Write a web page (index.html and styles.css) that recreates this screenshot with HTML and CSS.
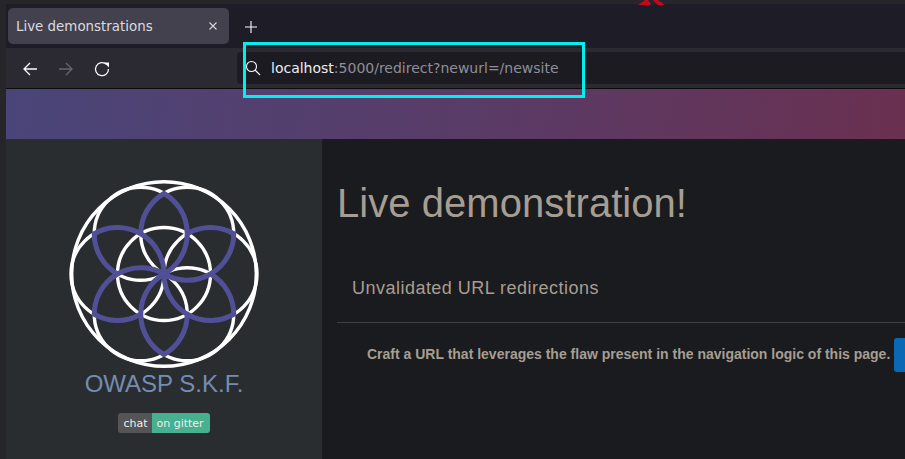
FILE: index.html
```html
<!DOCTYPE html>
<html lang="en">
<head>
  <meta charset="UTF-8">
  <title>Live demonstrations</title>
  <link rel="stylesheet" href="styles.css">
</head>
<body>
  <div class="window">
    <div class="tabbar">
      <div class="tab">
        <span>Live demonstrations</span>
        <svg class="tab-close" width="10" height="10" viewBox="0 0 10 10"><path d="M1.500 1.500l7 7M8.500 1.500l-7 7"/></svg>
      </div>
      <svg class="new-tab" width="12" height="12" viewBox="0 0 12 12"><path d="M6 0v12M0 6h12"/></svg>
    </div>

    <div class="toolbar">
      <div class="nav">
        <svg width="16" height="16" viewBox="0 0 16 16"><path d="M15 8H2M8 2L2 8l6 6"/></svg>
        <svg class="off" width="16" height="16" viewBox="0 0 16 16"><path d="M1 8h13M8 2l6 6-6 6"/></svg>
        <svg width="16" height="16" viewBox="0 0 16 16"><path d="M12.500 3.400A6.500 6.500 0 1 0 14.500 8"/><path class="fill" d="M10 1.500h5v5z"/></svg>
      </div>
      <div class="urlbar">
        <svg width="16" height="16" viewBox="0 0 16 16"><circle cx="6.500" cy="6.500" r="5"/><path d="M10 10l5 5"/></svg>
        <span class="url"><b>localhost</b>:5000/redirect?newurl=/newsite</span>
      </div>
    </div>

    <div class="page">
      <div class="banner"></div>
      <div class="columns">
        <aside class="sidebar">
          <svg class="logo" width="192" height="192" viewBox="-96 -96 192 192">
            <defs>
              <path id="petal" d="M-23.250-40.270A46.500 46.500 0 0 1 0-80.540A46.500 46.500 0 0 1 0 0"/>
            </defs>
            <g class="rings">
              <circle r="92.300"/>
              <circle r="46.500"/>
              <circle cx="46.500" r="46.500"/>
              <circle cx="-46.500" r="46.500"/>
              <circle cx="23.250" cy="-40.270" r="46.500"/>
              <circle cx="-23.250" cy="-40.270" r="46.500"/>
              <circle cx="23.250" cy="40.270" r="46.500"/>
              <circle cx="-23.250" cy="40.270" r="46.500"/>
            </g>
            <g class="petals">
              <use href="#petal"/>
              <use href="#petal" transform="rotate(60)"/>
              <use href="#petal" transform="rotate(120)"/>
              <use href="#petal" transform="rotate(180)"/>
              <use href="#petal" transform="rotate(240)"/>
              <use href="#petal" transform="rotate(300)"/>
            </g>
          </svg>
          <h2 class="brand">OWASP S.K.F.</h2>
          <div class="badge"><span class="badge-l">chat</span><span class="badge-r">on gitter</span></div>
        </aside>
        <main class="content">
          <h1>Live demonstration!</h1>
          <h3>Unvalidated URL redirections</h3>
          <hr>
          <div class="task">
            <p>Craft a URL that leverages the flaw present in the navigation logic of this page.</p>
            <button class="btn"></button>
          </div>
        </main>
      </div>
    </div>
  </div>

  <!-- annotation drawn over the screenshot -->
  <div class="highlight"></div>
  <svg class="red-mark" width="28" height="6" viewBox="0 0 28 6"><path d="M0 5L7 0h3l3 4-1 1zM15 0h5l7 5h-7z"/></svg>
</body>
</html>
```

FILE: styles.css
```css
html, body {
  margin: 0;
  height: 100%;
  overflow: hidden;
  background: #26262a;
}
.window {
  margin-left: 6px;
  padding-top: 4px;
  height: 455px;
  display: flex;
  flex-direction: column;
  font-family: 'DejaVu Sans', sans-serif;
}
.tabbar {
  height: 44px;
  flex: none;
  background: #1e1d27;
  display: flex;
  align-items: center;
  padding-left: 2px;
  box-sizing: border-box;
}
.tab {
  width: 221px;
  height: 36px;
  box-sizing: border-box;
  padding: 0 11px 0 8px;
  background: #42414d;
  border-radius: 5px;
  display: flex;
  align-items: center;
  justify-content: space-between;
  color: #dcdce0;
  font-size: 13.400px;
}
.tab-close path, .new-tab path {
  stroke: #d8d8dc;
  stroke-width: 1.100;
  fill: none;
}
.new-tab {
  margin-left: 16px;
  margin-top: 1px;
}
.new-tab path {
  stroke: #fbfbfe;
}
.toolbar {
  height: 40px;
  flex: none;
  background: #2b2a33;
  display: flex;
  align-items: center;
  border-bottom: 1px solid #0c0c0d;
}
.nav {
  width: 231px;
  padding: 1px 0 0 16px;
  box-sizing: border-box;
  display: flex;
  gap: 20px;
}
.nav svg, .urlbar svg {
  fill: none;
  stroke: #fbfbfe;
  stroke-width: 1.300;
}
.urlbar svg {
  stroke-width: 1.100;
}
.nav .off {
  stroke: #66656d;
}
.nav .fill {
  fill: #fbfbfe;
  stroke: none;
}
.urlbar {
  flex: 1;
  height: 32px;
  background: #1c1b22;
  border-radius: 4px 0 0 4px;
  display: flex;
  align-items: center;
  padding-left: 8px;
  gap: 10px;
}
.url {
  font-size: 14px;
  color: #8f8f96;
}
.url b {
  font-weight: 400;
  color: #eeeef0;
}
.page {
  flex: 1;
  display: flex;
  flex-direction: column;
  min-height: 0;
}
.banner {
  height: 50px;
  flex: none;
  background: linear-gradient(100deg, #4a4579 0%, #5a3b66 55%, #6a3050 100%);
}
.columns {
  flex: 1;
  display: flex;
  min-height: 0;
}
.sidebar {
  width: 316px;
  flex: none;
  background: #292d30;
  display: flex;
  flex-direction: column;
  align-items: center;
  padding-top: 39px;
  box-sizing: border-box;
}
.logo {
  flex: none;
}
.rings {
  fill: none;
  stroke: #fff;
  stroke-width: 3.400;
}
.petals {
  fill: none;
  stroke: #514f96;
  stroke-width: 5;
  stroke-miterlimit: 10;
}
.brand {
  margin: 0;
  font: 400 24px 'Liberation Sans', sans-serif;
  color: #748cb1;
}
.badge {
  margin-top: 15px;
  display: flex;
  height: 20px;
  line-height: 21px;
  border-radius: 3px;
  overflow: hidden;
  font-size: 11px;
  color: #eee;
}
.badge-l {
  background: #555;
  padding: 0 5px;
}
.badge-r {
  background: #46b08f;
  padding: 0 6px 0 4px;
}
.content {
  flex: 1;
  min-width: 0;
  overflow: hidden;
  background: #1a1b1e;
  padding: 0 0 0 15px;
  font-family: 'Liberation Sans', sans-serif;
  color: #a69e92;
}
h1 {
  margin: 40px 0 0;
  font-weight: 400;
  font-size: 40px;
  line-height: 48px;
  letter-spacing: 0.050px;
}
h3 {
  margin: 50px 0 0 15px;
  font-weight: 400;
  font-size: 18px;
  line-height: 22px;
  letter-spacing: 0.480px;
}
hr {
  margin: 23px 0 0;
  border: 0;
  border-top: 1px solid #3f3f3f;
}
.task {
  display: flex;
  align-items: flex-start;
  padding: 15px 0 0 30px;
  white-space: nowrap;
}
.task p {
  margin: 8px 0 0;
  font-size: 14px;
  font-weight: 700;
  line-height: 16px;
}
.btn {
  margin-left: 4px;
  width: 60px;
  height: 34px;
  flex: none;
  border: 0;
  border-radius: 3px;
  background: #0a68b4;
}
.highlight {
  position: absolute;
  left: 243px;
  top: 42px;
  width: 336px;
  height: 50px;
  border: 3px solid #00f0f0;
}
.red-mark {
  position: absolute;
  left: 638px;
  top: 0;
  fill: #c4061e;
}
```
